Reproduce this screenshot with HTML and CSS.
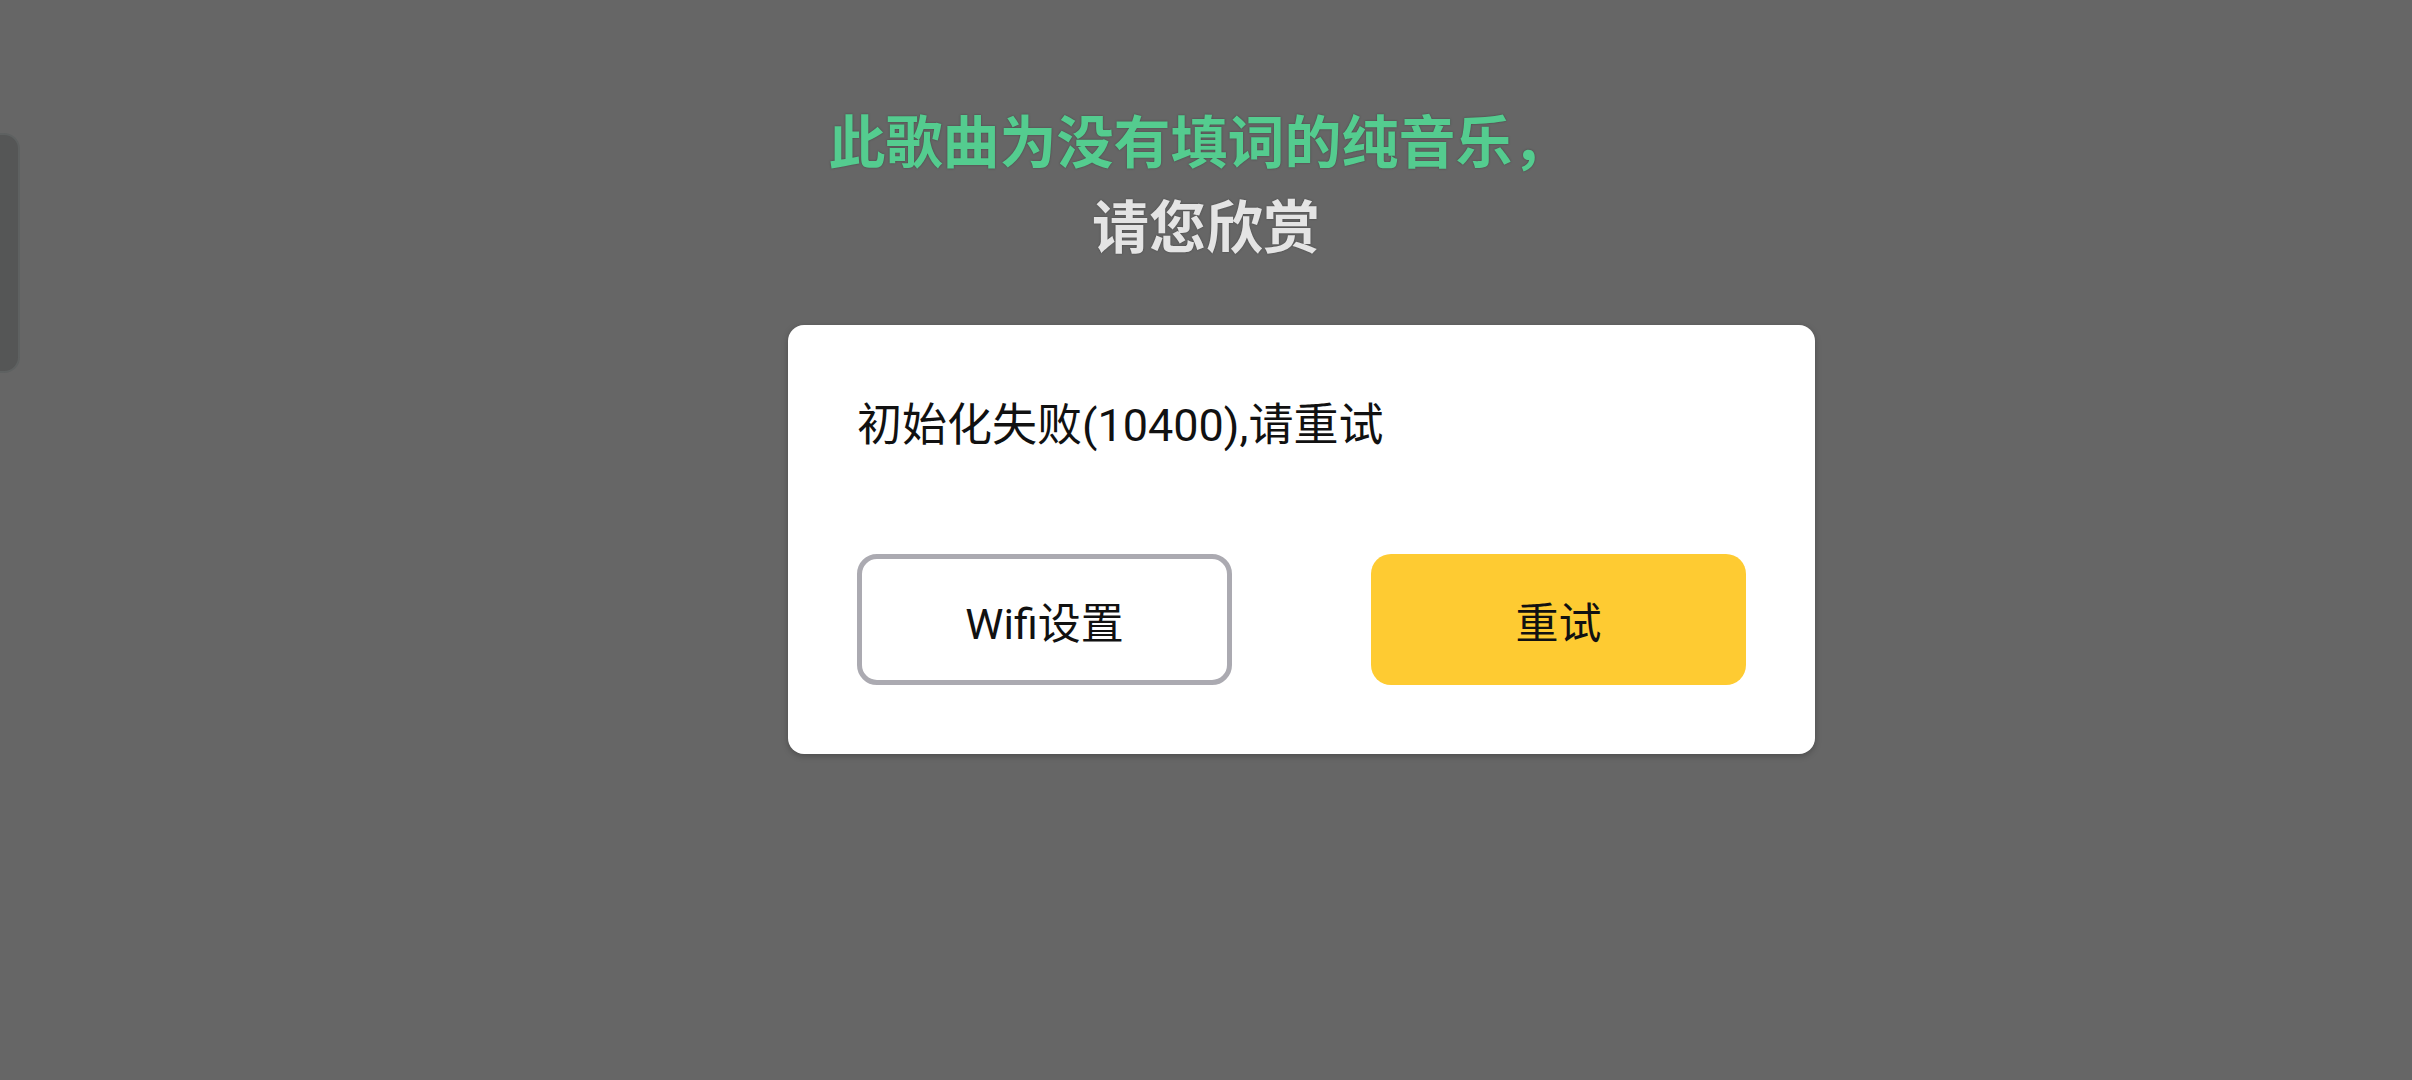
FILE: index.html
```html
<!DOCTYPE html>
<html lang="zh-CN">
<head>
<meta charset="utf-8">
<title>歌词</title>
<link rel="stylesheet" href="styles.css">
</head>
<body>
<div class="side-handle"></div>
<main class="page">
  <div class="lyric">
    <div class="lyric-line lyric-active">此歌曲为没有填词的纯音乐，</div>
    <div class="lyric-line">请您欣赏</div>
  </div>
  <section class="dialog">
    <p class="dialog-msg">初始化失败(10400),请重试</p>
    <div class="dialog-actions">
      <button class="btn btn-outline">Wifi设置</button>
      <button class="btn btn-primary">重试</button>
    </div>
  </section>
</main>
</body>
</html>
```
FILE: styles.css
```css
html, body {
  margin: 0;
  padding: 0;
  width: 2412px;
  height: 1080px;
  overflow: hidden;
  background: #666666;
  font-family: "Roboto", "Noto Sans CJK SC", sans-serif;
}
.side-handle {
  position: absolute;
  left: -20px;
  top: 133px;
  width: 36px;
  height: 236px;
  background: #555656;
  border: 2px solid #5e6161;
  border-radius: 16px;
}
.page {
  display: flex;
  flex-direction: column;
  padding-top: 96px;
}
.lyric {
  display: flex;
  flex-direction: column;
  align-items: center;
}
.lyric-line {
  font-family: "Noto Sans CJK SC", sans-serif;
  font-size: 57px;
  line-height: 85px;
  font-weight: 700;
  color: #e4e4e4;
  text-shadow: 0 0 2px rgba(40, 40, 40, 0.6);
}
.lyric-active {
  color: #54cc8f;
  padding-right: 14px;
}
.dialog {
  margin-top: 59px;
  margin-left: 788px;
  width: 1027px;
  height: 429px;
  box-sizing: border-box;
  padding: 69px;
  background: #ffffff;
  border-radius: 16px;
  box-shadow: 0 2px 6px rgba(0, 0, 0, 0.25);
  display: flex;
  flex-direction: column;
}
.dialog-msg {
  margin: 0;
  font-size: 45px;
  line-height: 64px;
  color: #111111;
}
.dialog-actions {
  margin-top: 96px;
  display: flex;
  justify-content: space-between;
}
.btn {
  width: 375px;
  height: 131px;
  box-sizing: border-box;
  border-radius: 20px;
  font-family: "Roboto", "Noto Sans CJK SC", sans-serif;
  font-size: 43px;
  color: #111111;
  display: flex;
  align-items: center;
  justify-content: center;
  padding: 0;
}
.btn-outline {
  background: #ffffff;
  border: 5px solid #abaab1;
}
.btn-primary {
  background: #fecb32;
  border: none;
}
```
